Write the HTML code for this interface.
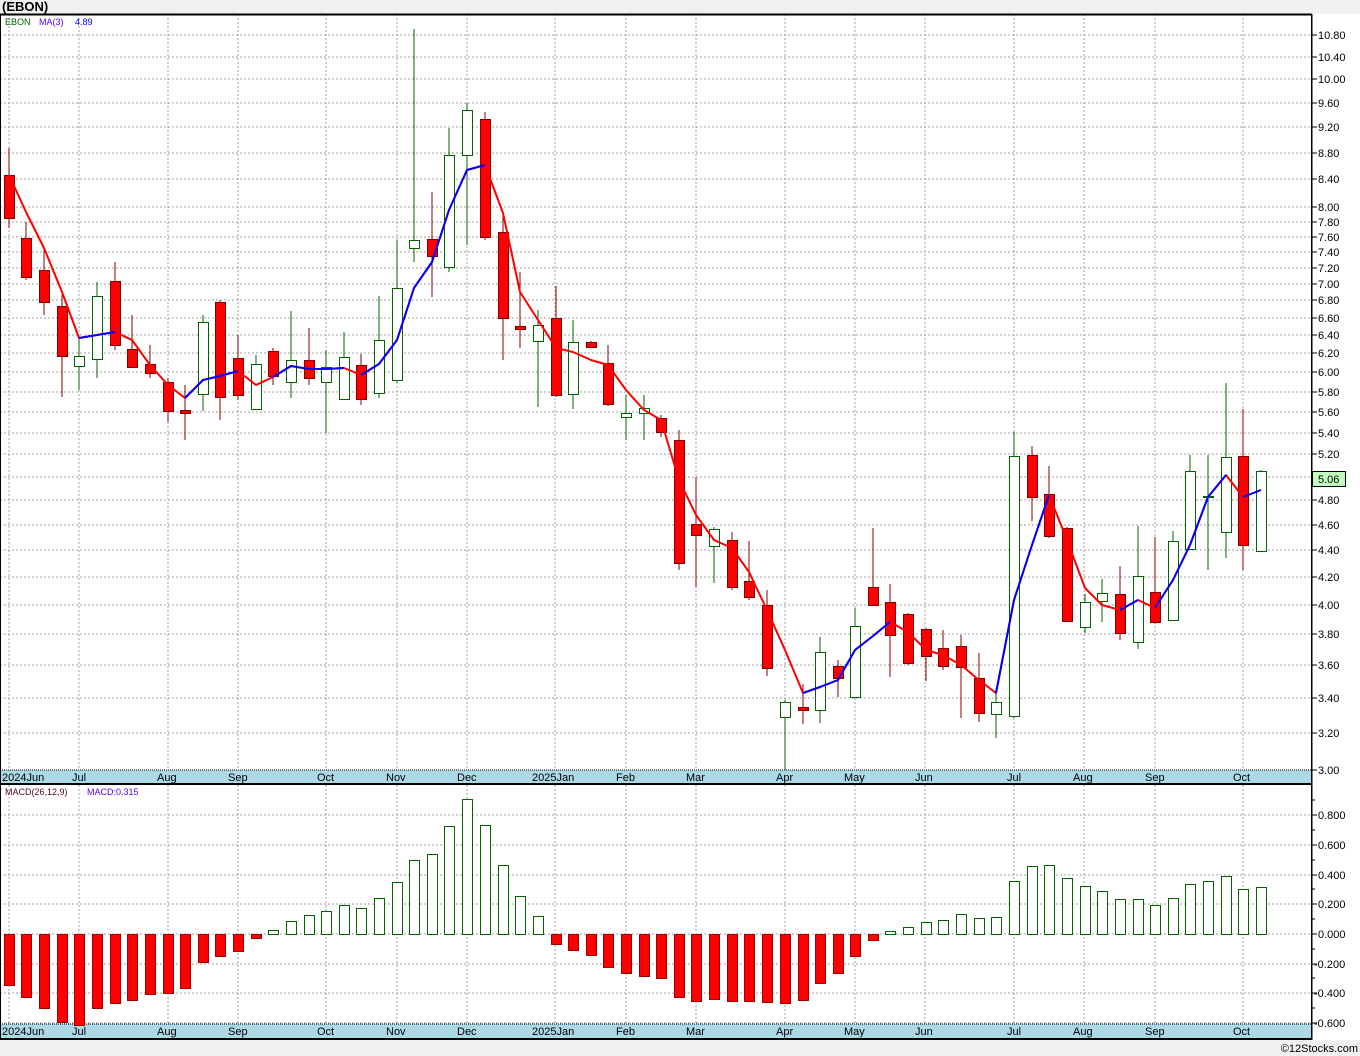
<!DOCTYPE html>
<html><head><meta charset="utf-8"><style>
html,body{margin:0;padding:0;background:#f0f0f0;}
svg{display:block;font-family:"Liberation Sans",sans-serif;}
</style></head><body>
<svg width="1360" height="1056" viewBox="0 0 1360 1056" xmlns="http://www.w3.org/2000/svg" shape-rendering="crispEdges">
<rect x="0" y="0" width="1360" height="1056" fill="#f0f0f0"/>
<text x="2" y="11" font-size="13" font-weight="bold" fill="#000">(EBON)</text>
<rect x="0" y="14" width="1312" height="756" fill="#fff"/>
<rect x="0" y="785" width="1312" height="239" fill="#fff"/>
<rect x="1312" y="14" width="48" height="1026" fill="#fff"/>
<!-- grids -->
<g stroke="#a0a0a0" stroke-width="1" stroke-dasharray="2,2">
<path d="M0 35H1312M0 57H1312M0 79H1312M0 103H1312M0 127H1312M0 153H1312M0 179H1312M0 207H1312M0 222H1312M0 237H1312M0 252H1312M0 268H1312M0 284H1312M0 300H1312M0 318H1312M0 335H1312M0 353H1312M0 372H1312M0 392H1312M0 412H1312M0 433H1312M0 454H1312M0 477H1312M0 500H1312M0 525H1312M0 550H1312M0 577H1312M0 605H1312M0 634H1312M0 665H1312M0 698H1312M0 733H1312"/>
<path d="M0 815H1312M0 845H1312M0 875H1312M0 904H1312M0 934H1312M0 964H1312M0 993H1312M0 1023H1312"/>
<path d="M9 14V770M79 14V770M168 14V770M238 14V770M326 14V770M397 14V770M467 14V770M555 14V770M626 14V770M696 14V770M785 14V770M855 14V770M925 14V770M1014 14V770M1084 14V770M1155 14V770M1243 14V770"/>
<path d="M9 785V1024M79 785V1024M168 785V1024M238 785V1024M326 785V1024M397 785V1024M467 785V1024M555 785V1024M626 785V1024M696 785V1024M785 785V1024M855 785V1024M925 785V1024M1014 785V1024M1084 785V1024M1155 785V1024M1243 785V1024"/>
</g>
<!-- date strips -->
<rect x="0" y="770" width="1312" height="14" fill="#add8e6"/>
<rect x="0" y="1024" width="1312" height="14" fill="#add8e6"/>
<path d="M0 770H1312" stroke="#000" stroke-dasharray="1,1"/>
<path d="M0 1024H1312" stroke="#000" stroke-dasharray="1,1"/>
<g font-size="11" fill="#000">
<text x="2" y="781">2024Jun</text><text x="72" y="781">Jul</text><text x="157" y="781">Aug</text><text x="228" y="781">Sep</text><text x="317" y="781">Oct</text><text x="386" y="781">Nov</text><text x="457" y="781">Dec</text><text x="532" y="781">2025Jan</text><text x="616" y="781">Feb</text><text x="686" y="781">Mar</text><text x="776" y="781">Apr</text><text x="844" y="781">May</text><text x="915" y="781">Jun</text><text x="1007" y="781">Jul</text><text x="1073" y="781">Aug</text><text x="1145" y="781">Sep</text><text x="1233" y="781">Oct</text>
<text x="2" y="1035">2024Jun</text><text x="72" y="1035">Jul</text><text x="157" y="1035">Aug</text><text x="228" y="1035">Sep</text><text x="317" y="1035">Oct</text><text x="386" y="1035">Nov</text><text x="457" y="1035">Dec</text><text x="532" y="1035">2025Jan</text><text x="616" y="1035">Feb</text><text x="686" y="1035">Mar</text><text x="776" y="1035">Apr</text><text x="844" y="1035">May</text><text x="915" y="1035">Jun</text><text x="1007" y="1035">Jul</text><text x="1073" y="1035">Aug</text><text x="1145" y="1035">Sep</text><text x="1233" y="1035">Oct</text>
</g>
<!-- borders -->
<path d="M0 14.5H1312M0 784H1312M0 1039H1312" stroke="#000" stroke-width="2"/>
<path d="M1311.5 14V1040" stroke="#000" stroke-width="1.5"/>
<path d="M0.5 14V1040" stroke="#000" stroke-width="1"/>
<!-- right axis ticks and labels -->
<g stroke="#000">
<path d="M1312 35h5M1312 57h5M1312 79h5M1312 103h5M1312 127h5M1312 153h5M1312 179h5M1312 207h5M1312 222h5M1312 237h5M1312 252h5M1312 268h5M1312 284h5M1312 300h5M1312 318h5M1312 335h5M1312 353h5M1312 372h5M1312 392h5M1312 412h5M1312 433h5M1312 454h5M1312 477h5M1312 500h5M1312 525h5M1312 550h5M1312 577h5M1312 605h5M1312 634h5M1312 665h5M1312 698h5M1312 733h5M1312 770h5"/>
<path d="M1312 815h5M1312 845h5M1312 875h5M1312 904h5M1312 934h5M1312 964h5M1312 993h5M1312 1023h5M1312 800h3M1312 830h3M1312 860h3M1312 889h3M1312 919h3M1312 949h3M1312 978h3M1312 1008h3"/>
</g>
<g font-size="11" fill="#000">
<text x="1318" y="39">10.80</text><text x="1318" y="61">10.40</text><text x="1318" y="83">10.00</text><text x="1318" y="107">9.60</text><text x="1318" y="131">9.20</text><text x="1318" y="157">8.80</text><text x="1318" y="183">8.40</text><text x="1318" y="211">8.00</text><text x="1318" y="226">7.80</text><text x="1318" y="241">7.60</text><text x="1318" y="256">7.40</text><text x="1318" y="272">7.20</text><text x="1318" y="288">7.00</text><text x="1318" y="304">6.80</text><text x="1318" y="322">6.60</text><text x="1318" y="339">6.40</text><text x="1318" y="357">6.20</text><text x="1318" y="376">6.00</text><text x="1318" y="396">5.80</text><text x="1318" y="416">5.60</text><text x="1318" y="437">5.40</text><text x="1318" y="458">5.20</text><text x="1318" y="504">4.80</text><text x="1318" y="529">4.60</text><text x="1318" y="554">4.40</text><text x="1318" y="581">4.20</text><text x="1318" y="609">4.00</text><text x="1318" y="638">3.80</text><text x="1318" y="669">3.60</text><text x="1318" y="702">3.40</text><text x="1318" y="737">3.20</text><text x="1318" y="774">3.00</text>
<text x="1318" y="819">0.800</text><text x="1318" y="849">0.600</text><text x="1318" y="879">0.400</text><text x="1318" y="908">0.200</text><text x="1318" y="938">0.000</text><text x="1314" y="968">-0.200</text><text x="1314" y="997">-0.400</text><text x="1314" y="1027">-0.600</text>
</g>
<rect x="1312.5" y="471.5" width="33" height="15" fill="#c0ffc0" stroke="#000"/>
<text x="1318" y="483" font-size="11" fill="#000">5.06</text>
<text x="5" y="25" font-size="9" fill="#006400">EBON</text>
<text x="39" y="25" font-size="9" fill="#6000ff">MA(3)</text>
<text x="75" y="25" font-size="9" fill="#0000ff">4.89</text>
<text x="5" y="795" font-size="9" fill="#600030">MACD(26,12,9)</text>
<text x="87" y="795" font-size="9" fill="#6000ff">MACD:0.315</text>
<text x="1358" y="1052" font-size="11" fill="#000" text-anchor="end">©12Stocks.com</text>

<!-- candles: red -->
<g stroke="#800000" fill="#ff0000">
<path fill="none" d="M9 148V228M26 222V280M44 247V315M62 295V397M115 262V350M132 315V368M150 345V378M168 378V422M185 385V440M220 300V420M238 335V400M273 348V385M309 328V385M361 354V405M432 192V297M485 112V240M503 212V360M520 272V348M556 286V397M591 341V348M608 345V406M661 415V437M679 430V570M696 477V587M732 532V590M749 541V600M767 590V676M803 684V724M838 660V697M873 528V606M890 584V677M908 613V665M926 628V681M943 630V670M961 635V718M979 653V722M1032 446V521M1049 466V538M1067 527V622M1120 566V640M1155 537V624M1243 409V570"/>
<rect x="4.5" y="175.5" width="10" height="43"/><rect x="21.5" y="238.5" width="10" height="39"/><rect x="39.5" y="270.5" width="10" height="32"/><rect x="57.5" y="306.5" width="10" height="50"/><rect x="110.5" y="281.5" width="10" height="64"/><rect x="127.5" y="349.5" width="10" height="18"/><rect x="145.5" y="364.5" width="10" height="9"/><rect x="163.5" y="382.5" width="10" height="29"/><rect x="180.5" y="410.5" width="10" height="3"/><rect x="215.5" y="302.5" width="10" height="95"/><rect x="233.5" y="358.5" width="10" height="37"/><rect x="268.5" y="351.5" width="10" height="25"/><rect x="304.5" y="360.5" width="10" height="18"/><rect x="356.5" y="365.5" width="10" height="34"/><rect x="427.5" y="239.5" width="10" height="17"/><rect x="480.5" y="119.5" width="10" height="118"/><rect x="498.5" y="232.5" width="10" height="86"/><rect x="515.5" y="326.5" width="10" height="3"/><rect x="551.5" y="318.5" width="10" height="77"/><rect x="586.5" y="342.5" width="10" height="5"/><rect x="603.5" y="363.5" width="10" height="41"/><rect x="656.5" y="418.5" width="10" height="14"/><rect x="674.5" y="440.5" width="10" height="123"/><rect x="691.5" y="524.5" width="10" height="11"/><rect x="727.5" y="540.5" width="10" height="47"/><rect x="744.5" y="581.5" width="10" height="16"/><rect x="762.5" y="605.5" width="10" height="63"/><rect x="798.5" y="707.5" width="10" height="3"/><rect x="833.5" y="666.5" width="10" height="12"/><rect x="868.5" y="587.5" width="10" height="18"/><rect x="885.5" y="602.5" width="10" height="33"/><rect x="903.5" y="614.5" width="10" height="49"/><rect x="921.5" y="629.5" width="10" height="27"/><rect x="938.5" y="648.5" width="10" height="18"/><rect x="956.5" y="646.5" width="10" height="21"/><rect x="974.5" y="678.5" width="10" height="35"/><rect x="1027.5" y="455.5" width="10" height="42"/><rect x="1044.5" y="494.5" width="10" height="42"/><rect x="1062.5" y="528.5" width="10" height="93"/><rect x="1115.5" y="594.5" width="10" height="39"/><rect x="1150.5" y="592.5" width="10" height="30"/><rect x="1238.5" y="456.5" width="10" height="89"/>
</g>
<!-- candles: green hollow -->
<g stroke="#006400" fill="#fff">
<path fill="none" d="M79 337V390M97 282V378M203 315V411M256 355V410M291 311V398M326 350V433M344 332V400M379 296V398M397 240V383M414 29V262M449 128V272M467 103V245M538 310V407M573 320V409M626 395V440M644 395V440M714 527V583M785 700V770M820 637V723M855 608V697M996 690V738M1014 432V718M1085 594V633M1102 579V622M1138 526V649M1173 531V621M1190 455V550M1208 455V570M1226 383V558M1261 470V552"/>
<rect x="74.5" y="356.5" width="10" height="10"/><rect x="92.5" y="296.5" width="10" height="63"/><rect x="198.5" y="322.5" width="10" height="72"/><rect x="251.5" y="364.5" width="10" height="45"/><rect x="286.5" y="360.5" width="10" height="22"/><rect x="321.5" y="367.5" width="10" height="15"/><rect x="339.5" y="357.5" width="10" height="42"/><rect x="374.5" y="340.5" width="10" height="53"/><rect x="392.5" y="288.5" width="10" height="92"/><rect x="409.5" y="240.5" width="10" height="8"/><rect x="444.5" y="155.5" width="10" height="112"/><rect x="462.5" y="110.5" width="10" height="45"/><rect x="533.5" y="325.5" width="10" height="16"/><rect x="568.5" y="342.5" width="10" height="52"/><rect x="621.5" y="413.5" width="10" height="4"/><rect x="639.5" y="408.5" width="10" height="5"/><rect x="709.5" y="529.5" width="10" height="17"/><rect x="780.5" y="702.5" width="10" height="15"/><rect x="815.5" y="652.5" width="10" height="58"/><rect x="850.5" y="626.5" width="10" height="71"/><rect x="991.5" y="702.5" width="10" height="12"/><rect x="1009.5" y="456.5" width="10" height="260"/><rect x="1080.5" y="602.5" width="10" height="25"/><rect x="1097.5" y="593.5" width="10" height="8"/><rect x="1133.5" y="576.5" width="10" height="66"/><rect x="1168.5" y="541.5" width="10" height="79"/><rect x="1185.5" y="471.5" width="10" height="78"/><rect x="1203.5" y="496.5" width="10" height="1"/><rect x="1221.5" y="457.5" width="10" height="75"/><rect x="1256.5" y="471.5" width="10" height="80"/>
</g>
<!-- MA line -->
<g fill="none" stroke-width="2" stroke-linejoin="round" shape-rendering="auto">
<polyline stroke="#ff0000" points="9,175 26,212 44,248 62,292 79,338 97,335 115,332 132,340 150,365 168,385 185,398 203,380 220,376 238,371 256,385 273,377 291,366 309,369 326,369 344,368 361,375 379,364 397,340 414,288 432,262 449,210 467,170 485,165 503,213 520,292 538,320 556,348 573,352 591,360 608,365 626,390 644,410 661,420 679,480 696,515 714,540 732,548 749,572 767,610 785,650 803,693 820,687 838,680 855,650 873,636 890,622 908,632 926,650 943,655 961,665 979,680 996,693 1014,600 1032,545 1049,495 1067,540 1085,588 1102,605 1120,610 1138,600 1155,608 1173,580 1190,545 1208,497 1226,475 1243,497 1261,490"/>
<polyline stroke="#0000ff" points="79,338 97,335 115,332"/>
<polyline stroke="#0000ff" points="185,398 203,380 220,376 238,371"/>
<polyline stroke="#0000ff" points="273,377 291,366 309,369 326,369 344,368"/>
<polyline stroke="#0000ff" points="361,375 379,364 397,340 414,288 432,262 449,210 467,170 485,165"/>
<polyline stroke="#0000ff" points="803,693 820,687 838,680 855,650 873,636 890,622"/>
<polyline stroke="#0000ff" points="996,693 1014,600 1032,545 1049,495"/>
<polyline stroke="#0000ff" points="1120,610 1138,600"/>
<polyline stroke="#0000ff" points="1155,608 1173,580 1190,545 1208,497 1226,475"/>
<polyline stroke="#0000ff" points="1243,497 1261,490"/>
</g>
<!-- MACD negative -->
<g fill="#ff0000" stroke="#a00000">
<rect x="4.5" y="934.5" width="10" height="51"/><rect x="21.5" y="934.5" width="10" height="63"/><rect x="39.5" y="934.5" width="10" height="74"/><rect x="57.5" y="934.5" width="10" height="88"/><rect x="74.5" y="934.5" width="10" height="91"/><rect x="92.5" y="934.5" width="10" height="74"/><rect x="110.5" y="934.5" width="10" height="69"/><rect x="127.5" y="934.5" width="10" height="66"/><rect x="145.5" y="934.5" width="10" height="60"/><rect x="163.5" y="934.5" width="10" height="59"/><rect x="180.5" y="934.5" width="10" height="54"/><rect x="198.5" y="934.5" width="10" height="28"/><rect x="215.5" y="934.5" width="10" height="22"/><rect x="233.5" y="934.5" width="10" height="17"/><rect x="251.5" y="934.5" width="10" height="4"/>
<rect x="551.5" y="934.5" width="10" height="10"/><rect x="568.5" y="934.5" width="10" height="16"/><rect x="586.5" y="934.5" width="10" height="21"/><rect x="603.5" y="934.5" width="10" height="33"/><rect x="621.5" y="934.5" width="10" height="39"/><rect x="639.5" y="934.5" width="10" height="42"/><rect x="656.5" y="934.5" width="10" height="44"/><rect x="674.5" y="934.5" width="10" height="63"/><rect x="691.5" y="934.5" width="10" height="67"/><rect x="709.5" y="934.5" width="10" height="65"/><rect x="727.5" y="934.5" width="10" height="67"/><rect x="744.5" y="934.5" width="10" height="67"/><rect x="762.5" y="934.5" width="10" height="68"/><rect x="780.5" y="934.5" width="10" height="69"/><rect x="798.5" y="934.5" width="10" height="66"/><rect x="815.5" y="934.5" width="10" height="49"/><rect x="833.5" y="934.5" width="10" height="39"/><rect x="850.5" y="934.5" width="10" height="22"/><rect x="868.5" y="934.5" width="10" height="6"/>
</g>
<!-- MACD positive -->
<g fill="#fff" stroke="#006400">
<rect x="268.5" y="930.5" width="10" height="4"/><rect x="286.5" y="921.5" width="10" height="13"/><rect x="304.5" y="915.5" width="10" height="19"/><rect x="321.5" y="911.5" width="10" height="23"/><rect x="339.5" y="905.5" width="10" height="29"/><rect x="356.5" y="908.5" width="10" height="26"/><rect x="374.5" y="898.5" width="10" height="36"/><rect x="392.5" y="882.5" width="10" height="52"/><rect x="409.5" y="860.5" width="10" height="74"/><rect x="427.5" y="854.5" width="10" height="80"/><rect x="444.5" y="826.5" width="10" height="108"/><rect x="462.5" y="799.5" width="10" height="135"/><rect x="480.5" y="825.5" width="10" height="109"/><rect x="498.5" y="865.5" width="10" height="69"/><rect x="515.5" y="896.5" width="10" height="38"/><rect x="533.5" y="916.5" width="10" height="18"/>
<rect x="885.5" y="931.5" width="10" height="3"/><rect x="903.5" y="927.5" width="10" height="7"/><rect x="921.5" y="922.5" width="10" height="12"/><rect x="938.5" y="920.5" width="10" height="14"/><rect x="956.5" y="914.5" width="10" height="20"/><rect x="974.5" y="918.5" width="10" height="16"/><rect x="991.5" y="917.5" width="10" height="17"/><rect x="1009.5" y="881.5" width="10" height="53"/><rect x="1027.5" y="866.5" width="10" height="68"/><rect x="1044.5" y="865.5" width="10" height="69"/><rect x="1062.5" y="878.5" width="10" height="56"/><rect x="1080.5" y="886.5" width="10" height="48"/><rect x="1097.5" y="891.5" width="10" height="43"/><rect x="1115.5" y="899.5" width="10" height="35"/><rect x="1133.5" y="899.5" width="10" height="35"/><rect x="1150.5" y="905.5" width="10" height="29"/><rect x="1168.5" y="898.5" width="10" height="36"/><rect x="1185.5" y="884.5" width="10" height="50"/><rect x="1203.5" y="881.5" width="10" height="53"/><rect x="1221.5" y="876.5" width="10" height="58"/><rect x="1238.5" y="889.5" width="10" height="45"/><rect x="1256.5" y="887.5" width="10" height="47"/>
</g>
</svg>
</body></html>
